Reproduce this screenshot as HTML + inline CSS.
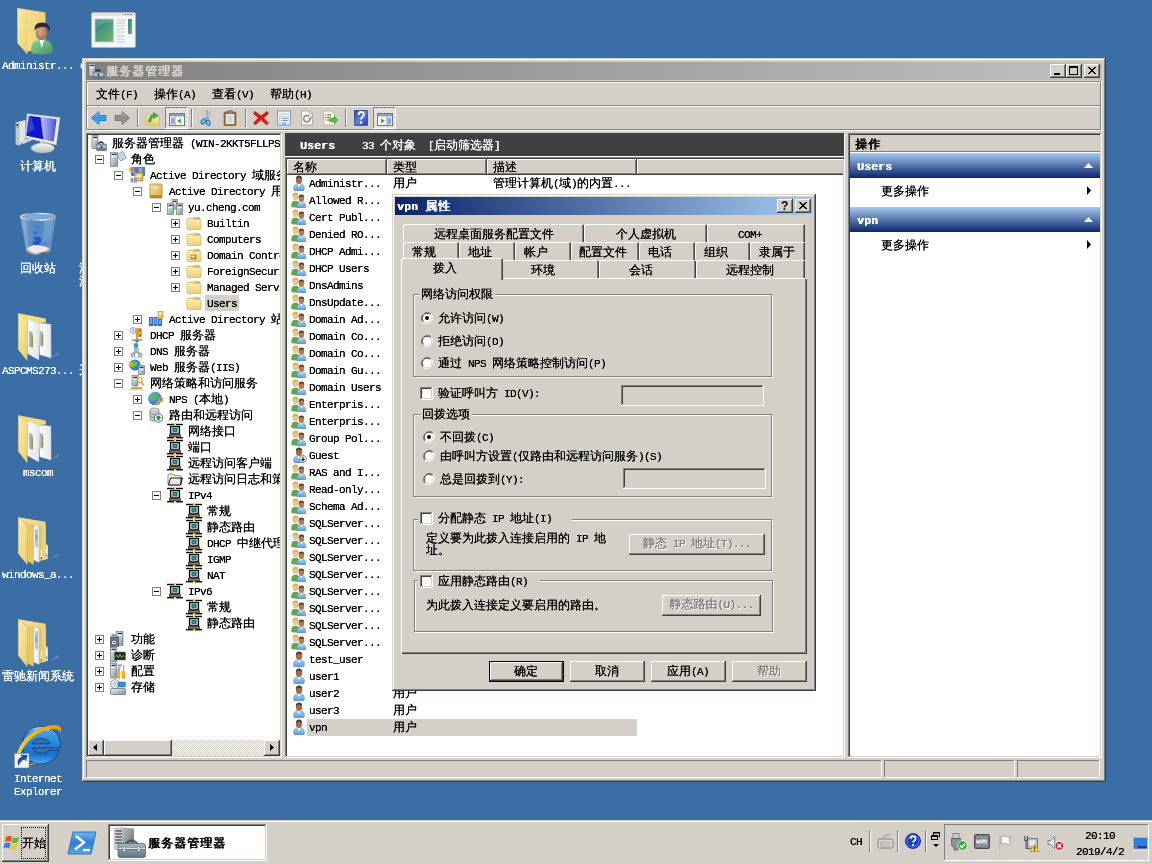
<!DOCTYPE html>
<html lang="zh-CN"><head><meta charset="utf-8"><title>服务器管理器</title>
<style>
*{box-sizing:border-box;margin:0;padding:0}
html,body{width:1152px;height:864px;overflow:hidden;background:#3a6ea5}
#root{left:0;top:0;width:1152px;height:864px;will-change:transform}
body{font-family:"Liberation Mono","WenQuanYi Zen Hei",monospace;font-size:12px;color:#000;position:relative;cursor:default;text-shadow:0 0 0 currentColor}
div{position:absolute}
svg{position:absolute;overflow:visible}
i{font-style:normal;font-size:11px;letter-spacing:-0.6px}
.t{white-space:pre;line-height:16px;height:16px}
.b{letter-spacing:1px;text-shadow:1px 0 0 currentColor,0 0 0 currentColor}
.b i{letter-spacing:0.4px}
.win{background:#d4d0c8;box-shadow:inset -1px -1px #404040,inset 1px 1px #d4d0c8,inset -2px -2px #808080,inset 2px 2px #fff}
.btn{background:#d4d0c8;box-shadow:inset -1px -1px #404040,inset 1px 1px #fff,inset -2px -2px #808080,inset 2px 2px #d4d0c8}
.sunk{box-shadow:inset -1px -1px #fff,inset 1px 1px #808080,inset -2px -2px #d4d0c8,inset 2px 2px #404040}
.sunk1{box-shadow:inset -1px -1px #fff,inset 1px 1px #808080}
.rais1{box-shadow:inset -1px -1px #808080,inset 1px 1px #fff}
.etch{box-shadow:inset -1px -1px #fff,inset 1px 1px #808080,inset -2px -2px #808080,inset 2px 2px #fff}
.chk{background-image:repeating-conic-gradient(#fff 0 25%,#d4d0c8 0 50%);background-size:2px 2px}
.dis{color:#808080;text-shadow:0 0 0 #808080,1px 1px 0 #fff}
.wl{color:#fff}
.dl{color:#fff;text-align:center;white-space:nowrap;line-height:13px}
.grp{border:1px solid #808080;box-shadow:1px 1px #fff,inset 1px 1px #fff}
.tab{background:#d4d0c8;border-radius:2px 2px 0 0;box-shadow:inset 1px 1px #fff,inset -1px 0 #404040,inset -2px 0 #808080;text-align:center;white-space:nowrap}
</style></head>
<body>
<svg width="0" height="0" style="position:absolute"><defs>
<linearGradient id="gSrv" x1="0" y1="0" x2="1" y2="1"><stop offset="0" stop-color="#eef2f5"/><stop offset="1" stop-color="#8494a2"/></linearGradient>
<linearGradient id="gTool" x1="0" y1="0" x2="0" y2="1"><stop offset="0" stop-color="#a8b8c6"/><stop offset="1" stop-color="#5f7282"/></linearGradient>
<linearGradient id="gBook" x1="0" y1="0" x2="1" y2="1"><stop offset="0" stop-color="#fbe9a6"/><stop offset="1" stop-color="#d9a92e"/></linearGradient>
<linearGradient id="gFold" x1="0" y1="0" x2="0" y2="1"><stop offset="0" stop-color="#fdf0bd"/><stop offset="1" stop-color="#efcf72"/></linearGradient>
<radialGradient id="gGlobe" cx=".35" cy=".3" r=".8"><stop offset="0" stop-color="#7fc4ff"/><stop offset="1" stop-color="#1858b8"/></radialGradient>
<linearGradient id="gShirt" x1="0" y1="0" x2="0" y2="1"><stop offset="0" stop-color="#a8d0f4"/><stop offset="1" stop-color="#5b9bdc"/></linearGradient>
<linearGradient id="gBlueArr" x1="0" y1="0" x2="0" y2="1"><stop offset="0" stop-color="#8fd0ff"/><stop offset=".5" stop-color="#2f95f0"/><stop offset="1" stop-color="#5fb8ff"/></linearGradient>
<linearGradient id="gGrayArr" x1="0" y1="0" x2="0" y2="1"><stop offset="0" stop-color="#c4c4c4"/><stop offset=".5" stop-color="#8a8a8a"/><stop offset="1" stop-color="#b0b0b0"/></linearGradient>
<linearGradient id="gHelp" x1="0" y1="0" x2="1" y2="1"><stop offset="0" stop-color="#2a3fb0"/><stop offset=".5" stop-color="#5f7fe0"/><stop offset="1" stop-color="#2438a8"/></linearGradient>
<pattern id="pDot" width="2" height="2" patternUnits="userSpaceOnUse"><rect width="2" height="2" fill="#f4ec5a"/><rect width="1" height="1" fill="#fff"/><rect x="1" y="1" width="1" height="1" fill="#fff"/></pattern>
<linearGradient id="gFoldBack" x1="0" y1="0" x2="1" y2="0"><stop offset="0" stop-color="#f6e49c"/><stop offset="1" stop-color="#ecd074"/></linearGradient>
<linearGradient id="gFoldFront" x1="0" y1="0" x2="1" y2="1"><stop offset="0" stop-color="#fbeeb0"/><stop offset="1" stop-color="#eccb64"/></linearGradient>
<linearGradient id="gDoc" x1="0" y1="0" x2="1" y2="0"><stop offset="0" stop-color="#fff"/><stop offset="1" stop-color="#e4e6e8"/></linearGradient>
<linearGradient id="gGreenShirt" x1="0" y1="0" x2="1" y2="1"><stop offset="0" stop-color="#8fd0a0"/><stop offset="1" stop-color="#3f9a5c"/></linearGradient>
<radialGradient id="gSkin" cx=".4" cy=".4" r=".7"><stop offset="0" stop-color="#d9a884"/><stop offset="1" stop-color="#9a6848"/></radialGradient>
<linearGradient id="gGreenPic" x1="0" y1="0" x2="1" y2="1"><stop offset="0" stop-color="#2f7f8a"/><stop offset="1" stop-color="#6fb86a"/></linearGradient>
<linearGradient id="gScreen" x1="0" y1="0" x2="1" y2="1"><stop offset="0" stop-color="#1018c0"/><stop offset=".5" stop-color="#0a18d8"/><stop offset="1" stop-color="#0810a8"/></linearGradient>
<linearGradient id="gStand" x1="0" y1="0" x2="0" y2="1"><stop offset="0" stop-color="#f4f5f6"/><stop offset="1" stop-color="#b8bec4"/></linearGradient>
<linearGradient id="gBin" x1="0" y1="0" x2="1" y2="0"><stop offset="0" stop-color="#7fa8d8"/><stop offset=".45" stop-color="#5288c4"/><stop offset="1" stop-color="#6f9cd0"/></linearGradient>
<radialGradient id="gIE" cx=".5" cy=".4" r=".6"><stop offset="0" stop-color="#7fd0ff" stop-opacity=".0"/><stop offset="1" stop-color="#1c56b8" stop-opacity="0"/></radialGradient>
<linearGradient id="gIEe" x1="0" y1="0" x2="0" y2="1"><stop offset="0" stop-color="#5fa8e0"/><stop offset=".35" stop-color="#2a8fdc"/><stop offset=".75" stop-color="#1c6fd0"/><stop offset="1" stop-color="#48b0f0"/></linearGradient>
<linearGradient id="gGloss" x1="0" y1="0" x2="1" y2="0"><stop offset="0" stop-color="#fff" stop-opacity=".75"/><stop offset="1" stop-color="#fff" stop-opacity=".25"/></linearGradient>
<linearGradient id="gBinBase" x1="0" y1="0" x2="1" y2="0"><stop offset="0" stop-color="#a8aeb4"/><stop offset=".4" stop-color="#f0f2f4"/><stop offset=".7" stop-color="#60666c"/><stop offset="1" stop-color="#c8ccd0"/></linearGradient>
<linearGradient id="gRim" x1="0" y1="0" x2="1" y2="0"><stop offset="0" stop-color="#e8eaec"/><stop offset=".3" stop-color="#a08a70"/><stop offset=".6" stop-color="#f4f4f4"/><stop offset="1" stop-color="#b09a80"/></linearGradient>
<radialGradient id="gIEb" cx=".5" cy=".5" r=".5"><stop offset="0" stop-color="#3a6ea5" stop-opacity="0"/><stop offset="1" stop-color="#3a6ea5" stop-opacity="0"/></radialGradient>
<linearGradient id="gOrbit" x1="0" y1="1" x2="1" y2="0"><stop offset="0" stop-color="#e8d860"/><stop offset=".4" stop-color="#f8c010"/><stop offset="1" stop-color="#f09810"/></linearGradient>
<linearGradient id="gSrvSide" x1="0" y1="0" x2="1" y2="1"><stop offset="0" stop-color="#b8bcc0"/><stop offset="1" stop-color="#666c72"/></linearGradient>
<linearGradient id="gPS" x1="0" y1="0" x2="0" y2="1"><stop offset="0" stop-color="#6fb4f0"/><stop offset=".5" stop-color="#2f7fd0"/><stop offset="1" stop-color="#58a8e8"/></linearGradient>
<symbol id="i_srvmgr" viewBox="0 0 16 16"><rect x="1" y="0.5" width="6" height="13" fill="url(#gSrv)" stroke="#5a6a78" stroke-width=".6"/><rect x="2" y="1.8" width="4" height="1.2" fill="#2c3e50"/><rect x="2" y="4" width="4" height="1" fill="#fff"/><path d="M7.5 8.5q2.5-3 5 0" fill="none" stroke="#222" stroke-width="1.3"/><rect x="5.5" y="9" width="10" height="6.5" rx="1" fill="url(#gTool)" stroke="#4a5a68" stroke-width=".6"/><rect x="5.5" y="11.3" width="10" height="1" fill="#dfe8ee"/><rect x="9.8" y="10.8" width="1.4" height="2.4" fill="#333"/></symbol><symbol id="i_roles" viewBox="0 0 16 16"><rect x="0.5" y="1.5" width="7" height="14" fill="url(#gSrv)" stroke="#5a6a78" stroke-width=".6"/><rect x="1.5" y="2.8" width="5" height="1.2" fill="#2c3e50"/><rect x="1.5" y="5" width="5" height="1" fill="#fff"/><rect x="4.7" y="12.7" width="1.6" height="1.6" fill="#5fdc3a"/><path d="M7.5 3.200l5.500-2.700 3 6.500-5.500 3z" fill="#e6eefa" stroke="#5f86b8" stroke-width=".8"/><path d="M9.300 4.600l3.500-1.600M10.100 6.300l3.500-1.600M10.900 8l3.500-1.600" stroke="#7fa0c8" stroke-width=".7"/></symbol><symbol id="i_adds" viewBox="0 0 16 16"><rect x="2" y="0" width="14" height="9" fill="#4d7fd6"/><rect x="10" y="1" width="3" height="6" fill="#c9a46a"/><rect x="6" y="6" width="8" height="8" fill="url(#gBook)" stroke="#a07818" stroke-width=".6"/><rect x="8" y="8" width="4" height="2" fill="#fff6d5"/><circle cx="2.6" cy="2.6" r="2" fill="none" stroke="#e8a020" stroke-width="1.3"/><path d="M4 4l4 4" stroke="#e8a020" stroke-width="1.4"/><rect x="1.5" y="11" width="3" height="4.5" fill="#8d9aa6"/><rect x="5" y="11" width="3" height="4.5" fill="#8d9aa6"/><rect x="2.2" y="14" width="1.4" height="1.2" fill="#5fdc3a"/><rect x="5.8" y="14" width="1.4" height="1.2" fill="#5fdc3a"/></symbol><symbol id="i_aduc" viewBox="0 0 16 16"><rect x="2" y="1" width="12" height="14" rx=".8" fill="url(#gBook)" stroke="#a07818" stroke-width=".7"/><rect x="5" y="3.3" width="6" height="2.6" fill="#fff8dc" stroke="#c9a646" stroke-width=".4"/><rect x="2" y="12.2" width="12" height="2.8" fill="#b88a1e"/></symbol><symbol id="i_domain" viewBox="0 0 16 16"><rect x="5" y="0.5" width="5.5" height="9" fill="url(#gSrv)" stroke="#5a6a78" stroke-width=".6"/><rect x="6" y="1.8" width="3.5" height="1.2" fill="#2c3e50"/><rect x="6" y="4" width="3.5" height="1" fill="#fff"/><rect x="0.5" y="4.5" width="6" height="11" fill="url(#gSrv)" stroke="#5a6a78" stroke-width=".6"/><rect x="1.5" y="5.8" width="4" height="1.2" fill="#2c3e50"/><rect x="1.5" y="8" width="4" height="1" fill="#fff"/><rect x="3.7" y="12.7" width="1.6" height="1.6" fill="#5fdc3a"/><rect x="9.5" y="4.5" width="6" height="11" fill="url(#gSrv)" stroke="#5a6a78" stroke-width=".6"/><rect x="10.5" y="5.8" width="4" height="1.2" fill="#2c3e50"/><rect x="10.5" y="8" width="4" height="1" fill="#fff"/><rect x="12.7" y="12.7" width="1.6" height="1.6" fill="#5fdc3a"/><rect x="7" y="9" width="1.8" height="1.8" fill="#5fdc3a"/></symbol><symbol id="i_folder" viewBox="0 0 16 16"><path d="M1.5 3.5h4.5l1.5-1.5h6q1 0 1 1v1.500h-13z" fill="#e8c76a"/><path d="M1 4.500q0-1 1-1h4l1 1h7q1 0 1 1v8q0 1-1 1h-12q-1 0-1-1z" fill="url(#gFold)" stroke="#d1a845" stroke-width=".6"/><rect x="10.500" y="2.600" width="2.500" height="1.200" fill="#7db4e8"/></symbol><symbol id="i_folderdc" viewBox="0 0 16 16"><path d="M1.5 3.5h4.5l1.5-1.5h6q1 0 1 1v1.500h-13z" fill="#e8c76a"/><path d="M1 4.500q0-1 1-1h4l1 1h7q1 0 1 1v8q0 1-1 1h-12q-1 0-1-1z" fill="url(#gFold)" stroke="#d1a845" stroke-width=".6"/><rect x="10.500" y="2.600" width="2.500" height="1.200" fill="#7db4e8"/><rect x="4.500" y="7.500" width="6" height="5" fill="#b98d28"/><rect x="5.500" y="8.500" width="3" height="2" fill="#fdf3cf"/></symbol><symbol id="i_sites" viewBox="0 0 16 16"><rect x="1" y="6" width="4" height="9" fill="#2f6fd0"/><rect x="5.500" y="6" width="4" height="9" fill="#2f6fd0"/><rect x="10" y="8" width="4" height="7" fill="#2f6fd0"/><path d="M2 8h2M2 10h2M2 12h2M6.500 8h2M6.500 10h2M6.500 12h2M11 10h2M11 12h2" stroke="#cfe2ff" stroke-width=".9"/><rect x="10" y="0.500" width="5" height="7" fill="url(#gBook)" stroke="#a07818" stroke-width=".5"/><rect x="11.200" y="2" width="2.600" height="1.500" fill="#fff6d5"/></symbol><symbol id="i_dhcp" viewBox="0 0 16 16"><circle cx="4" cy="3.500" r="3" fill="#eef2f6" stroke="#7a8894" stroke-width=".7"/><path d="M4 1.800v1.900l1.300.8" stroke="#445" stroke-width=".7" fill="none"/><rect x="7" y="1.500" width="5.500" height="8.500" rx="1" fill="#e9a23a" stroke="#b8741a" stroke-width=".5"/><circle cx="11" cy="3.500" r="1" fill="#d22"/><circle cx="11" cy="6" r="1" fill="#f6d21c"/><circle cx="11" cy="8.300" r="1" fill="#3a3"/><path d="M8 10v3M3 13h10" stroke="#c8862a" stroke-width="1.400"/><circle cx="8" cy="14" r="1.800" fill="#3c8ddc"/></symbol><symbol id="i_dns" viewBox="0 0 16 16"><circle cx="7" cy="2.500" r="2.400" fill="#3c8ddc"/><path d="M5.500 2q1.500-1.500 3 0" fill="#5fc24a"/><rect x="5.500" y="5.500" width="4" height="3" fill="#b8c0c8" stroke="#7a8590" stroke-width=".5"/><rect x="2" y="10.500" width="4" height="3" fill="#b8c0c8" stroke="#7a8590" stroke-width=".5"/><rect x="9" y="10.500" width="4" height="3" fill="#b8c0c8" stroke="#7a8590" stroke-width=".5"/><path d="M7.500 8.500v1M4 10.500v-1h7v1" stroke="#7a8590" stroke-width=".7" fill="none"/><rect x="1" y="14" width="13" height="1.500" fill="#d8dde2"/></symbol><symbol id="i_iis" viewBox="0 0 16 16"><circle cx="6" cy="6" r="5.500" fill="#2f7fd8"/><path d="M3 3q3-2 5 0t-1 4-4 1 0-5z" fill="#5fc24a"/><path d="M0.500 2.500l5 2.500-2.500 1 1 2.500-3.500-2z" fill="#f0b428" stroke="#c88a10" stroke-width=".4"/><rect x="9.5" y="6.5" width="6" height="9" fill="url(#gSrv)" stroke="#5a6a78" stroke-width=".6"/><rect x="10.5" y="7.8" width="4" height="1.2" fill="#2c3e50"/><rect x="10.5" y="10" width="4" height="1" fill="#fff"/><rect x="12.7" y="12.7" width="1.6" height="1.6" fill="#5fdc3a"/></symbol><symbol id="i_npas" viewBox="0 0 16 16"><rect x="3" y="0.5" width="6" height="10" fill="url(#gSrv)" stroke="#5a6a78" stroke-width=".6"/><rect x="4" y="1.8" width="4" height="1.2" fill="#2c3e50"/><rect x="4" y="4" width="4" height="1" fill="#fff"/><path d="M2 13h11M7 10.500v2.500" stroke="#c8862a" stroke-width="1.300"/><circle cx="10.500" cy="5" r="2.500" fill="none" stroke="#e8a020" stroke-width="1.200"/><path d="M12 7l3 3.500" stroke="#e8a020" stroke-width="1.500"/><rect x="0.500" y="14" width="14" height="1.200" fill="#c9ced4"/></symbol><symbol id="i_nps" viewBox="0 0 16 16"><circle cx="7" cy="7.500" r="6.800" fill="url(#gGlobe)"/><path d="M3 4q3-3 6-1t-1 4-4 2-1-5zM9 10q3-1 3 1t-2 2.500z" fill="#59b846"/><circle cx="13" cy="8.500" r="1.900" fill="none" stroke="#f0a818" stroke-width="1.300"/><path d="M11.700 9.800l-5 4" stroke="#f0a818" stroke-width="1.500"/></symbol><symbol id="i_rras" viewBox="0 0 16 16"><ellipse cx="6.500" cy="3" rx="4.500" ry="2" fill="#dfe4e8" stroke="#6a7680" stroke-width=".7"/><path d="M2 3v9q0 2 4.500 2t4.500-2v-9" fill="#c5ccd3" stroke="#6a7680" stroke-width=".7"/><path d="M2 6.500q4.500 2.500 9 0M2 9.500q4.500 2.500 9 0" fill="none" stroke="#6a7680" stroke-width=".6"/><circle cx="10.500" cy="11" r="4.300" fill="#fff" stroke="#444" stroke-width=".8"/><path d="M10.500 8l3 3.200h-1.800v2.300h-2.400v-2.300h-1.800z" fill="#1f9a2f"/></symbol><symbol id="i_net" viewBox="0 0 16 16"><rect x="0" y="0.800" width="16" height="1.400" fill="#000"/><rect x="0" y="14" width="16" height="1.400" fill="#000"/><rect x="7" y="0" width="2" height="3.200" fill="#f4e400"/><rect x="7" y="13" width="2" height="3" fill="#f4e400"/><rect x="3.500" y="3.500" width="9" height="7" fill="#c0c0c0" stroke="#000" stroke-width="1.200"/><rect x="6" y="5.300" width="4" height="3.200" fill="#00b0b0" stroke="#303030" stroke-width=".6"/><rect x="5" y="10.500" width="6" height="1.500" fill="#808080"/><rect x="2.500" y="11.800" width="11" height="1.400" fill="#c8c8c8" stroke="#000" stroke-width=".8"/></symbol><symbol id="i_logfold" viewBox="0 0 16 16"><path d="M1 4.500q0-1.500 1.500-1.500h3.500l1.500 1.500h5q1.500 0 1.500 1.500v1" fill="#f4f0c0" stroke="#808080" stroke-width=".9"/><path d="M1 4.500v8.500q0 1 1 1h11" fill="none" stroke="#808080" stroke-width=".9"/><path d="M3.500 7h12l-2 7h-12z" fill="url(#pDot)" stroke="#000" stroke-width=".9"/><path d="M14 7v6.500" stroke="#000" stroke-width=".9"/></symbol><symbol id="i_feat" viewBox="0 0 16 16"><rect x="6.5" y="0.5" width="6.5" height="14" fill="url(#gSrv)" stroke="#5a6a78" stroke-width=".6"/><rect x="7.5" y="1.8" width="4.5" height="1.2" fill="#2c3e50"/><rect x="7.5" y="4" width="4.5" height="1" fill="#fff"/><rect x="10.2" y="11.7" width="1.6" height="1.6" fill="#5fdc3a"/><rect x="0.500" y="6" width="8" height="9.500" fill="#6f7d8a" stroke="#333" stroke-width=".6"/><circle cx="4" cy="11.500" r="2.600" fill="#eef2f6" stroke="#222" stroke-width=".7"/><circle cx="4" cy="11.500" r=".8" fill="#222"/><rect x="1.500" y="3" width="4.500" height="3" fill="#8aa0b8"/></symbol><symbol id="i_diag" viewBox="0 0 16 16"><rect x="0.5" y="0.5" width="6" height="14.5" fill="url(#gSrv)" stroke="#5a6a78" stroke-width=".6"/><rect x="1.5" y="1.8" width="4" height="1.2" fill="#2c3e50"/><rect x="1.5" y="4" width="4" height="1" fill="#fff"/><rect x="3.7" y="12.2" width="1.6" height="1.6" fill="#5fdc3a"/><rect x="4.500" y="5" width="11" height="8" fill="#222" stroke="#777" stroke-width=".7"/><path d="M5.500 10l1.500-2 1.500 3 1.500-4 1.500 3.500 1.500-2 1.500 1" fill="none" stroke="#63e04a" stroke-width=".9"/></symbol><symbol id="i_conf" viewBox="0 0 16 16"><rect x="0.5" y="0.5" width="6" height="14.5" fill="url(#gSrv)" stroke="#5a6a78" stroke-width=".6"/><rect x="1.5" y="1.8" width="4" height="1.2" fill="#2c3e50"/><rect x="1.5" y="4" width="4" height="1" fill="#fff"/><rect x="3.7" y="12.2" width="1.6" height="1.6" fill="#5fdc3a"/><path d="M9 1q-2 1.500-.500 3.500l-1 3h2l.500-3q2-1 1-3.500l-1 1.500h-1z" fill="#c9cfd6" stroke="#6a7680" stroke-width=".5"/><rect x="7.500" y="7.500" width="2.500" height="8" rx=".6" fill="#f4b71e" stroke="#b8801a" stroke-width=".4"/><rect x="12" y="8.500" width="3" height="7" rx=".8" fill="#f4b71e" stroke="#b8801a" stroke-width=".4"/><rect x="12.900" y="2" width="1.200" height="6.500" fill="#9aa5ae"/></symbol><symbol id="i_stor" viewBox="0 0 16 16"><circle cx="5" cy="5" r="4.500" fill="#dfe4e8" stroke="#7a8894" stroke-width=".7"/><circle cx="5" cy="5" r="1.300" fill="#fff" stroke="#7a8894" stroke-width=".5"/><rect x="8" y="3" width="7.500" height="5" rx=".8" fill="#3b8fe0" stroke="#1f5fa8" stroke-width=".5"/><rect x="0.500" y="9.500" width="15" height="6" rx="1.200" fill="url(#gSrv)" stroke="#5a6a78" stroke-width=".7"/><rect x="11.500" y="11.800" width="2" height="1.600" fill="#5fdc3a"/></symbol><symbol id="i_user" viewBox="0 0 16 16"><path d="M3 15.500q-1.500-5 2.500-6.500h5q4 1.500 2.500 6.500q-5 1-10 0z" fill="url(#gShirt)" stroke="#4a86c4" stroke-width=".5"/><path d="M6.500 9l1.500 3 1.500-3z" fill="#fff"/><ellipse cx="8" cy="5" rx="3.100" ry="4" fill="#a8683c"/><path d="M4.800 4.500q0-4 3.200-4t3.300 3.500q-1.500-1.500-3.300-1.500t-3.200 2z" fill="#3a3f45"/></symbol><symbol id="i_group" viewBox="0 0 16 16"><path d="M0.500 15q-1-4.500 2-6h4q3 1.500 2 6q-4 1-8 0z" fill="#5da84a"/><ellipse cx="4.500" cy="5" rx="2.700" ry="3.500" fill="#e8c49a"/><path d="M1.500 5q-.500-4.500 3-4.500t3 4q-1.500-2-3-2t-3 2.500z" fill="#d9b24a"/><path d="M6 15.700q-1-4.300 2-5.700h4.500q3 1.400 2.200 5.700q-4.400.8-8.700 0z" fill="url(#gShirt)" stroke="#4a86c4" stroke-width=".4"/><path d="M9.200 10l1.200 2.300 1.200-2.300z" fill="#fff"/><ellipse cx="10.400" cy="6.500" rx="2.700" ry="3.500" fill="#b87848"/><path d="M7.600 6q0-3.500 2.800-3.500t2.900 3.200q-1.400-1.400-2.900-1.400t-2.800 1.700z" fill="#3a3f45"/></symbol><symbol id="i_userdis" viewBox="0 0 16 16"><path d="M3 15.500q-1.500-5 2.500-6.500h5q4 1.500 2.500 6.500q-5 1-10 0z" fill="url(#gShirt)" stroke="#4a86c4" stroke-width=".5"/><path d="M6.500 9l1.500 3 1.500-3z" fill="#fff"/><ellipse cx="8" cy="5" rx="3.100" ry="4" fill="#a8683c"/><path d="M4.800 4.500q0-4 3.200-4t3.300 3.500q-1.500-1.500-3.300-1.500t-3.200 2z" fill="#3a3f45"/><circle cx="12" cy="12" r="3.500" fill="#fff" stroke="#555" stroke-width=".7"/><path d="M12 9.800v3.500M10.300 11.800l1.700 1.800 1.700-1.800" fill="none" stroke="#222" stroke-width="1.100"/></symbol><symbol id="i_back" viewBox="0 0 16 16"><path d="M8 1.500v4h7v5h-7v4l-7.500-6.500z" fill="url(#gBlueArr)" stroke="#1a6fc8" stroke-width=".8" stroke-linejoin="round"/></symbol><symbol id="i_fwd" viewBox="0 0 16 16"><path d="M8 1.500v4h-7v5h7v4l7.500-6.500z" fill="url(#gGrayArr)" stroke="#6a6a6a" stroke-width=".8" stroke-linejoin="round"/></symbol><symbol id="i_up" viewBox="0 0 16 16"><path d="M1 5h6l1.500 1.500h6v8.500h-13.500z" fill="url(#gFold)" stroke="#d1a845" stroke-width=".7"/><path d="M3.500 12q0-6 5-7.500v-2l4.500 3-4.500 3.300v-2q-2.500.7-2.700 5.200z" fill="#3cb43c" stroke="#1c7a1c" stroke-width=".5"/><rect x="11" y="4" width="2.500" height="1.200" fill="#7db4e8"/></symbol><symbol id="i_tree" viewBox="0 0 16 16"><rect x="0.500" y="2.500" width="15" height="12" fill="#fff" stroke="#6a7a99" stroke-width="1"/><rect x="1" y="3" width="14" height="2.500" fill="#8c9cc0"/><rect x="1" y="5.500" width="5" height="8.500" fill="#dfe6f4"/><path d="M2 8h3M2 10h3M2 12h3" stroke="#3a66c8" stroke-width="1"/><path d="M6 5.500v8.500" stroke="#6a7a99" stroke-width=".8"/><path d="M12 7.500v5l-4-2.500z" fill="#3cae3c"/></symbol><symbol id="i_pane" viewBox="0 0 16 16"><rect x="0.500" y="2.500" width="15" height="12" fill="#fff" stroke="#6a7a99" stroke-width="1"/><rect x="1" y="3" width="14" height="2.500" fill="#8c9cc0"/><rect x="10" y="5.500" width="5" height="8.500" fill="#dfe6f4"/><path d="M11 8h3M11 10h3M11 12h3" stroke="#3a66c8" stroke-width="1"/><path d="M10 5.500v8.500" stroke="#6a7a99" stroke-width=".8"/><path d="M4 7.500v5l4-2.500z" fill="#3cae3c"/></symbol><symbol id="i_cut" viewBox="0 0 16 16"><g transform="rotate(14 8 8)"><path d="M10.300 0.500l-4 9.500M6 0.500l3.800 9.500" stroke="#8aa0bc" stroke-width="1.700"/><path d="M10.300 0.500l-2.600 6.200" stroke="#dfe8f4" stroke-width=".8"/><ellipse cx="5.200" cy="12.300" rx="1.700" ry="2.500" fill="none" stroke="#1f7fe0" stroke-width="1.500" transform="rotate(25 5.200 12.300)"/><ellipse cx="10.300" cy="12.300" rx="1.700" ry="2.500" fill="none" stroke="#1f7fe0" stroke-width="1.500" transform="rotate(-25 10.300 12.300)"/></g></symbol><symbol id="i_paste" viewBox="0 0 16 16"><rect x="2" y="2" width="12" height="13.500" rx="1" fill="#a86a32" stroke="#7a4a1c" stroke-width=".6"/><rect x="3.800" y="4" width="8.400" height="10" fill="#fff"/><path d="M4.800 6h6.400M4.800 8h6.400M4.800 10h6.400M4.800 12h6.400" stroke="#7f9cc8" stroke-width=".8"/><rect x="5.500" y="0.800" width="5" height="2.800" rx=".6" fill="#8a8f96" stroke="#555" stroke-width=".5"/></symbol><symbol id="i_del" viewBox="0 0 16 16"><path d="M2 1.500l6 4.500 6-4.500 1.500 2-5 4.500 5 5-2 1.800-5.500-5-5.500 5-2-1.800 5-5-5-4.500z" fill="#e01818" stroke="#a80c0c" stroke-width=".6" stroke-linejoin="round"/></symbol><symbol id="i_prop" viewBox="0 0 16 16"><rect x="1.500" y="1" width="13" height="14" fill="#f4f7fb" stroke="#8a96a8" stroke-width="1"/><rect x="3" y="3" width="10" height="2" fill="#d5dce8"/><rect x="3.500" y="6.500" width="9" height="6" fill="#fff" stroke="#a8b4c8" stroke-width=".6"/><path d="M5 8.300h1M7 8.300h4.500M5 10.500h1M7 10.500h4.500" stroke="#3a76d8" stroke-width=".9"/><rect x="6" y="13.300" width="4" height="1.400" fill="#2fb6f0"/></symbol><symbol id="i_refresh" viewBox="0 0 16 16"><path d="M2.500 1h8l3 3v11h-11z" fill="#f6f6f6" stroke="#a0a0a0" stroke-width=".8"/><path d="M10.500 1v3h3" fill="#e0e0e0" stroke="#a0a0a0" stroke-width=".6"/><path d="M11 9a3.200 3.200 0 1 1-1-2.600" fill="none" stroke="#8a8a8a" stroke-width="1.600"/><path d="M9.200 9.200h3.300v-3.200z" fill="#8a8a8a"/></symbol><symbol id="i_export" viewBox="0 0 16 16"><path d="M1.500 1h8l3 3v11h-11z" fill="#fbf6dc" stroke="#b8b090" stroke-width=".8"/><path d="M3.300 5h1M5.300 5h4M3.300 7.500h1M5.300 7.500h3M3.300 10h1M5.300 10h2.500" stroke="#4a5a78" stroke-width="1"/><path d="M8 8.500h4v-2.200l3.800 3.700-3.800 3.700v-2.200h-4z" fill="#4cc43c" stroke="#1f8a1f" stroke-width=".6"/></symbol><symbol id="i_help" viewBox="0 0 16 16"><rect x="1.500" y="0.500" width="13" height="15" fill="url(#gHelp)" stroke="#1c2f8a" stroke-width=".6"/><path d="M5.500 5q0-3 2.700-3t2.600 2.600q0 1.500-1.400 2.400t-1.300 2.500" fill="none" stroke="#fff" stroke-width="1.900"/><circle cx="8.100" cy="12.500" r="1.200" fill="#fff"/></symbol><symbol id="B_folder_docs" viewBox="0 0 48 48"><path d="M4.400 0.200l27.200 5.200.400 4-18 1z" fill="#f3dc7e"/><path d="M13.500 6l11.600 4.600-.300 36.300-11.300-6.500z" fill="url(#gDoc)" stroke="#d0d4d8" stroke-width=".5"/><path d="M15 18l3.500 1v16l-3.500-1.500z" fill="#7fa8a0" opacity=".75"/><path d="M17.500 22l1.500 .500v12l-1.500-.500z" fill="#a07830" opacity=".8"/><path d="M15 36l8 3.500M15 38.500l8 3.500" stroke="#dcdfe2" stroke-width=".8"/><path d="M25.100 9.900l11.700 1.300.300 33.700-11.300-3.200z" fill="url(#gDoc)" stroke="#d0d4d8" stroke-width=".5"/><path d="M26 18l3 .800v15l-3-1z" fill="#7fa8a0" opacity=".75"/><path d="M28 21l1.300 .400v11l-1.300-.400z" fill="#a07830" opacity=".8"/><path d="M38 44l6-5 1 3z" fill="#fff" opacity=".18"/><path d="M4.400 0.200l9.100 7.500-.400 39.800-8.700-11z" fill="url(#gFoldFront)" stroke="#e9cf74" stroke-width=".5"/></symbol><symbol id="B_folder_sub" viewBox="0 0 48 48"><path d="M4.400 0.200l27.200 4.500.400 22.700 1.900.600v13.700l-6.200 1.900-14-36z" fill="url(#gFoldBack)"/><path d="M13.500 7.300l6.500.700-.400 39.500-6.100-3.200z" fill="#e6c866" stroke="#cfae4c" stroke-width=".4"/><path d="M20 8l5.100 1v36.600l-5.500-2.600z" fill="url(#gDoc)" stroke="#b8bcc0" stroke-width=".4"/><path d="M21 12l3 .600v18l-3-.800z" fill="#aeb6c0" opacity=".8"/><path d="M21.500 17l1.500.300v6l-1.500-.300z" fill="#5f9ad8" opacity=".8"/><path d="M25.100 9l2.600-.400v34.400l-2.600 2z" fill="#e2c25c"/><path d="M27.700 8.600l4 .600.300 18.200 1.900.600v13.700l-6.200 1.900z" fill="#ecd07a"/><path d="M26.800 33h1.200v9h-1.200z" fill="#fff"/><rect x="26.800" y="40" width="1.200" height="2.200" fill="#2f8fe8"/><path d="M32 30h1.200v9.500h-1.200z" fill="#fff"/><rect x="32" y="37.500" width="1.200" height="2" fill="#2f8fe8"/><path d="M36 42l8-6 1 3z" fill="#fff" opacity=".18"/><path d="M4.400 0.200l9.100 7.500-.400 39.800-8.700-11z" fill="url(#gFoldFront)" stroke="#e9cf74" stroke-width=".5"/></symbol><symbol id="B_userfolder" viewBox="0 0 48 48"><path d="M2.500 1l28 4.500v36l-18 3z" fill="url(#gFoldBack)"/><path d="M2.500 1l10 7-.300 39-9.700-11z" fill="url(#gFoldFront)" stroke="#e9cf74" stroke-width=".5"/><path d="M16.500 46q-2-11 6.500-13h7.500q8.500 2 7 13q-10.500 2.500-21 0z" fill="url(#gGreenShirt)"/><path d="M24.500 33l2.200 8 2.300-8z" fill="#fff"/><ellipse cx="26.500" cy="26" rx="5.800" ry="7.300" fill="url(#gSkin)"/><path d="M19.500 24q-1-8.500 7.500-8.500t8 9.500q-2-5.500-8-5.200t-7.500 4.200z" fill="#2a2a2a"/></symbol><symbol id="B_cpl" viewBox="0 0 48 48"><rect x="0.500" y="0.500" width="44" height="35" rx="1.500" fill="#f4f6f8" stroke="#aab0b8" stroke-width="1"/><rect x="1" y="1" width="43" height="3" fill="#dfe3e8"/><rect x="4" y="7" width="18.500" height="23" fill="url(#gGreenPic)" stroke="#c8ccd0" stroke-width="1"/><path d="M5 16q6-7 17-6v-2.500h-17z" fill="#fff" opacity=".15"/><path d="M26 8h8M26 11h8M26 14h8M26 17h8M26 20h8M26 24h8M26 27h8M26 30h8" stroke="#c4c8cc" stroke-width="1"/><rect x="37" y="7" width="4" height="15" fill="url(#gGreenPic)"/><path d="M33 2.500h2M36 2.500h2M39 2.500h2" stroke="#888" stroke-width="1.200"/></symbol><symbol id="B_computer" viewBox="0 0 48 48"><path d="M1.800 12.800l3.900-1.300 5.800-1.500v18l-5.800 7.500-3.900-1.300z" fill="#e4e6e9"/><path d="M1.800 12.800l3.900-1.300v24l-3.900-1.300z" fill="#c4c8cd"/><rect x="2.600" y="14" width="1.600" height="2" fill="#222"/><rect x="2.600" y="15.800" width="1.600" height="2.200" fill="#4fe01c"/><path d="M6 31l10-3.500 4 1.500-11 5z" fill="#e9ebee"/><path d="M7.500 32.500l9-3.600" stroke="#9aa0a8" stroke-width=".7"/><path d="M26 31l7 2.500-.500 5h-7.500z" fill="#d4d8dc"/><ellipse cx="28.700" cy="38.100" rx="11.700" ry="4.900" fill="url(#gStand)" stroke="#b0b6bc" stroke-width=".5"/><path d="M13.100 3.700l32.800 3.900-3.600 27.300-30.800-7.200z" fill="#eceef0" stroke="#b8bcc2" stroke-width=".6"/><path d="M14.800 5.700l27.800 3.500-2.900 22.400-27.500-5.800z" fill="url(#gScreen)"/><path d="M26.500 7.200l16.100 2-2.900 22.400-10.300-2.200z" fill="url(#gGloss)"/><path d="M14.800 5.700l2 .300 3.500 13-7.500 5z" fill="#fff" opacity=".18"/></symbol><symbol id="B_bin" viewBox="0 0 48 48"><path d="M6.300 6l5.900 35q12 4.500 24 0l5.700-35z" fill="url(#gBin)" opacity=".9"/><path d="M30 9l9 -1-2.500 16-8 8z" fill="#fff" opacity=".12"/><path d="M8 9l4 1 3 28-2.500-.500z" fill="#fff" opacity=".15"/><circle cx="21" cy="21.500" r="1.600" fill="#2458d0" opacity=".8"/><path d="M22.500 26q4-1 4.500 3t-3.500 5-4.500-1.500 2-2.500-1-2 2.500-2z" fill="#1f4fd0" opacity=".85"/><ellipse cx="24" cy="39" rx="12" ry="5" fill="url(#gBinBase)"/><ellipse cx="24" cy="38" rx="10" ry="3.400" fill="#e8eaec"/><path d="M12 40q12 7 24 0" fill="none" stroke="#50565c" stroke-width="1" opacity=".7"/><ellipse cx="24" cy="5.700" rx="17.400" ry="3.400" fill="#79a9de" stroke="url(#gRim)" stroke-width="1.300"/></symbol><symbol id="B_ie" viewBox="0 0 48 48"><circle cx="27.100" cy="25.200" r="18.300" fill="url(#gIEb)"/><path d="M27.100 6.400a18.800 18.800 0 1 0 18 24h-9.500a10.500 9 0 0 1-17.600-2.600h28.400a18.800 18.800 0 0 0-19.300-21.400zM18 23.800a9.500 7.500 0 0 1 18.200 0z" fill="url(#gIEe)" fill-rule="evenodd" stroke="#0c2f80" stroke-width=".7"/><path d="M13 12q8-6.500 19-5 4 1.500 3 4-12-3.500-22 1z" fill="#fff" opacity=".35"/><path d="M3 33q4-12 14-19.500t22-8.500q7 0 8 3.500t-1.500 4q1.500-3.500-6.500-3.500-11 .500-20 8t-13 17.500z" fill="url(#gOrbit)"/><path d="M16 44.500l6-2.500-.500 1-5 2.300z" fill="#f0b020"/><rect x="0.500" y="33.500" width="14.500" height="14.500" fill="#f4f6f8" stroke="#8a929c" stroke-width=".7"/><path d="M4.500 46q-3-7 3.500-9.500l-1.500-2 7 .500-1.500 6.500-1.500-2q-4 1-6 6.500z" fill="#1c4fa8"/></symbol>
</defs></svg>
<div id="root">
<svg style="left:15px;top:7px" width="48" height="48"><use href="#B_userfolder"/></svg>
<div class="dl" style="left:-22px;top:60px;width:120px;height:13px"><i>Administr...</i></div>
<svg style="left:91px;top:12px" width="48" height="48"><use href="#B_cpl"/></svg>
<div class="dl" style="left:53px;top:60px;width:120px;height:13px"><i>desktop.ini</i></div>
<svg style="left:14px;top:110px" width="48" height="48"><use href="#B_computer"/></svg>
<div class="dl" style="left:-22px;top:161px;width:120px;height:13px">计算机</div>
<svg style="left:14px;top:211px" width="48" height="48"><use href="#B_bin"/></svg>
<div class="dl" style="left:-22px;top:263px;width:120px;height:13px">回收站</div>
<div class="dl" style="left:55px;top:263px;width:120px;height:13px">渗透测试环境</div>
<div class="dl" style="left:55px;top:276px;width:120px;height:13px">源码演示文档</div>
<svg style="left:14px;top:313px" width="48" height="48"><use href="#B_folder_docs"/></svg>
<div class="dl" style="left:-22px;top:365px;width:120px;height:13px"><i>ASPCMS273...</i></div>
<div class="dl" style="left:55px;top:365px;width:120px;height:13px">开发环境配置</div>
<svg style="left:14px;top:415px" width="48" height="48"><use href="#B_folder_docs"/></svg>
<div class="dl" style="left:-22px;top:467px;width:120px;height:13px"><i>mscom</i></div>
<svg style="left:14px;top:517px" width="48" height="48"><use href="#B_folder_sub"/></svg>
<div class="dl" style="left:-22px;top:569px;width:120px;height:13px"><i>windows_a...</i></div>
<svg style="left:14px;top:619px" width="48" height="48"><use href="#B_folder_sub"/></svg>
<div class="dl" style="left:-22px;top:671px;width:120px;height:13px">雷驰新闻系统</div>
<svg style="left:14px;top:720px" width="48" height="48"><use href="#B_ie"/></svg>
<div class="dl" style="left:-22px;top:773px;width:120px;height:13px"><i>Internet</i></div>
<div class="dl" style="left:-22px;top:786px;width:120px;height:13px"><i>Explorer</i></div>
<div class="win" style="left:82px;top:58px;width:1024px;height:724px;"></div>
<div style="left:86px;top:62px;width:1016px;height:18px;background:linear-gradient(90deg,#808080,#c0c0c0)"></div>
<svg style="left:88px;top:63px" width="16" height="16"><use href="#i_srvmgr"/></svg>
<div class="t b" style="left:106px;top:64px;height:16px;line-height:16px;color:#d4d0c8">服务器管理器</div>
<div class="btn" style="left:1050px;top:64px;width:16px;height:14px;"><div style="left:4px;top:9px;width:6px;height:2px;background:#000"></div></div>
<div class="btn" style="left:1066px;top:64px;width:16px;height:14px;"><div style="left:3px;top:2px;width:9px;height:9px;border:1px solid #000;border-top-width:2px"></div></div>
<div class="btn" style="left:1084px;top:64px;width:16px;height:14px;"><svg style="left:4px;top:3px" width="8" height="7"><path d="M0 0l7 7M1 0l7 7M7 0l-7 7M8 0l-7 7" stroke="#000" stroke-width="1" shape-rendering="crispEdges"/></svg></div>
<div class="etch" style="left:86px;top:81px;width:1016px;height:26px;"></div>
<div class="t" style="left:96px;top:87px;height:16px;line-height:16px;">文件<i>(F)</i></div>
<div class="t" style="left:154px;top:87px;height:16px;line-height:16px;">操作<i>(A)</i></div>
<div class="t" style="left:212px;top:87px;height:16px;line-height:16px;">查看<i>(V)</i></div>
<div class="t" style="left:270px;top:87px;height:16px;line-height:16px;">帮助<i>(H)</i></div>
<div class="etch" style="left:86px;top:105px;width:1016px;height:26px;"></div>
<div style="left:137px;top:109px;width:2px;height:18px;background:#808080;border-right:1px solid #fff"></div>
<div style="left:191px;top:109px;width:2px;height:18px;background:#808080;border-right:1px solid #fff"></div>
<div style="left:245px;top:109px;width:2px;height:18px;background:#808080;border-right:1px solid #fff"></div>
<div style="left:345px;top:109px;width:2px;height:18px;background:#808080;border-right:1px solid #fff"></div>
<svg style="left:91px;top:110px" width="16" height="16"><use href="#i_back"/></svg>
<svg style="left:114px;top:110px" width="16" height="16"><use href="#i_fwd"/></svg>
<svg style="left:145px;top:110px" width="16" height="16"><use href="#i_up"/></svg>
<div class="chk sunk1" style="left:165px;top:107px;width:23px;height:22px;"></div>
<svg style="left:169px;top:111px" width="16" height="16"><use href="#i_tree"/></svg>
<svg style="left:199px;top:110px" width="16" height="16"><use href="#i_cut"/></svg>
<svg style="left:222px;top:110px" width="16" height="16"><use href="#i_paste"/></svg>
<svg style="left:253px;top:110px" width="16" height="16"><use href="#i_del"/></svg>
<svg style="left:276px;top:110px" width="16" height="16"><use href="#i_prop"/></svg>
<svg style="left:299px;top:110px" width="16" height="16"><use href="#i_refresh"/></svg>
<svg style="left:322px;top:110px" width="16" height="16"><use href="#i_export"/></svg>
<svg style="left:353px;top:110px" width="16" height="16"><use href="#i_help"/></svg>
<div class="chk sunk1" style="left:373px;top:107px;width:23px;height:22px;"></div>
<svg style="left:377px;top:111px" width="16" height="16"><use href="#i_pane"/></svg>
<div class="sunk" style="left:86px;top:133px;width:196px;height:625px;background:#fff"></div>
<div style="left:88px;top:135px;width:192px;height:605px;overflow:hidden"><svg style="left:3px;top:0px" width="16" height="16"><use href="#i_srvmgr"/></svg><div class="t" style="left:24px;top:1px;height:16px;line-height:16px;">服务器管理器<i> (WIN-2KKT5FLLPS</i></div><div style="left:7px;top:20px;width:9px;height:9px;border:1px solid #808080;background:#fff"><div style="left:1px;top:3px;width:5px;height:1px;background:#000"></div></div><svg style="left:22px;top:16px" width="16" height="16"><use href="#i_roles"/></svg><div class="t" style="left:43px;top:17px;height:16px;line-height:16px;">角色</div><div style="left:26px;top:36px;width:9px;height:9px;border:1px solid #808080;background:#fff"><div style="left:1px;top:3px;width:5px;height:1px;background:#000"></div></div><svg style="left:41px;top:32px" width="16" height="16"><use href="#i_adds"/></svg><div class="t" style="left:62px;top:33px;height:16px;line-height:16px;"><i>Active Directory </i>域服务</div><div style="left:45px;top:52px;width:9px;height:9px;border:1px solid #808080;background:#fff"><div style="left:1px;top:3px;width:5px;height:1px;background:#000"></div></div><svg style="left:60px;top:48px" width="16" height="16"><use href="#i_aduc"/></svg><div class="t" style="left:81px;top:49px;height:16px;line-height:16px;"><i>Active Directory </i>用户和计算机</div><div style="left:64px;top:68px;width:9px;height:9px;border:1px solid #808080;background:#fff"><div style="left:1px;top:3px;width:5px;height:1px;background:#000"></div></div><svg style="left:79px;top:64px" width="16" height="16"><use href="#i_domain"/></svg><div class="t" style="left:100px;top:65px;height:16px;line-height:16px;"><i>yu.cheng.com</i></div><div style="left:83px;top:84px;width:9px;height:9px;border:1px solid #808080;background:#fff"><div style="left:1px;top:3px;width:5px;height:1px;background:#000"></div><div style="left:3px;top:1px;width:1px;height:5px;background:#000"></div></div><svg style="left:98px;top:80px" width="16" height="16"><use href="#i_folder"/></svg><div class="t" style="left:119px;top:81px;height:16px;line-height:16px;"><i>Builtin</i></div><div style="left:83px;top:100px;width:9px;height:9px;border:1px solid #808080;background:#fff"><div style="left:1px;top:3px;width:5px;height:1px;background:#000"></div><div style="left:3px;top:1px;width:1px;height:5px;background:#000"></div></div><svg style="left:98px;top:96px" width="16" height="16"><use href="#i_folder"/></svg><div class="t" style="left:119px;top:97px;height:16px;line-height:16px;"><i>Computers</i></div><div style="left:83px;top:116px;width:9px;height:9px;border:1px solid #808080;background:#fff"><div style="left:1px;top:3px;width:5px;height:1px;background:#000"></div><div style="left:3px;top:1px;width:1px;height:5px;background:#000"></div></div><svg style="left:98px;top:112px" width="16" height="16"><use href="#i_folderdc"/></svg><div class="t" style="left:119px;top:113px;height:16px;line-height:16px;"><i>Domain Controllers</i></div><div style="left:83px;top:132px;width:9px;height:9px;border:1px solid #808080;background:#fff"><div style="left:1px;top:3px;width:5px;height:1px;background:#000"></div><div style="left:3px;top:1px;width:1px;height:5px;background:#000"></div></div><svg style="left:98px;top:128px" width="16" height="16"><use href="#i_folder"/></svg><div class="t" style="left:119px;top:129px;height:16px;line-height:16px;"><i>ForeignSecurityPrincipals</i></div><div style="left:83px;top:148px;width:9px;height:9px;border:1px solid #808080;background:#fff"><div style="left:1px;top:3px;width:5px;height:1px;background:#000"></div><div style="left:3px;top:1px;width:1px;height:5px;background:#000"></div></div><svg style="left:98px;top:144px" width="16" height="16"><use href="#i_folder"/></svg><div class="t" style="left:119px;top:145px;height:16px;line-height:16px;"><i>Managed Service Accounts</i></div><svg style="left:98px;top:160px" width="16" height="16"><use href="#i_folder"/></svg><div style="left:117px;top:160px;width:34px;height:16px;background:#d4d0c8"></div><div class="t" style="left:119px;top:161px;height:16px;line-height:16px;"><i>Users</i></div><div style="left:45px;top:180px;width:9px;height:9px;border:1px solid #808080;background:#fff"><div style="left:1px;top:3px;width:5px;height:1px;background:#000"></div><div style="left:3px;top:1px;width:1px;height:5px;background:#000"></div></div><svg style="left:60px;top:176px" width="16" height="16"><use href="#i_sites"/></svg><div class="t" style="left:81px;top:177px;height:16px;line-height:16px;"><i>Active Directory </i>站点和服务</div><div style="left:26px;top:196px;width:9px;height:9px;border:1px solid #808080;background:#fff"><div style="left:1px;top:3px;width:5px;height:1px;background:#000"></div><div style="left:3px;top:1px;width:1px;height:5px;background:#000"></div></div><svg style="left:41px;top:192px" width="16" height="16"><use href="#i_dhcp"/></svg><div class="t" style="left:62px;top:193px;height:16px;line-height:16px;"><i>DHCP </i>服务器</div><div style="left:26px;top:212px;width:9px;height:9px;border:1px solid #808080;background:#fff"><div style="left:1px;top:3px;width:5px;height:1px;background:#000"></div><div style="left:3px;top:1px;width:1px;height:5px;background:#000"></div></div><svg style="left:41px;top:208px" width="16" height="16"><use href="#i_dns"/></svg><div class="t" style="left:62px;top:209px;height:16px;line-height:16px;"><i>DNS </i>服务器</div><div style="left:26px;top:228px;width:9px;height:9px;border:1px solid #808080;background:#fff"><div style="left:1px;top:3px;width:5px;height:1px;background:#000"></div><div style="left:3px;top:1px;width:1px;height:5px;background:#000"></div></div><svg style="left:41px;top:224px" width="16" height="16"><use href="#i_iis"/></svg><div class="t" style="left:62px;top:225px;height:16px;line-height:16px;"><i>Web </i>服务器<i>(IIS)</i></div><div style="left:26px;top:244px;width:9px;height:9px;border:1px solid #808080;background:#fff"><div style="left:1px;top:3px;width:5px;height:1px;background:#000"></div></div><svg style="left:41px;top:240px" width="16" height="16"><use href="#i_npas"/></svg><div class="t" style="left:62px;top:241px;height:16px;line-height:16px;">网络策略和访问服务</div><div style="left:45px;top:260px;width:9px;height:9px;border:1px solid #808080;background:#fff"><div style="left:1px;top:3px;width:5px;height:1px;background:#000"></div><div style="left:3px;top:1px;width:1px;height:5px;background:#000"></div></div><svg style="left:60px;top:256px" width="16" height="16"><use href="#i_nps"/></svg><div class="t" style="left:81px;top:257px;height:16px;line-height:16px;"><i>NPS (</i>本地<i>)</i></div><div style="left:45px;top:276px;width:9px;height:9px;border:1px solid #808080;background:#fff"><div style="left:1px;top:3px;width:5px;height:1px;background:#000"></div></div><svg style="left:60px;top:272px" width="16" height="16"><use href="#i_rras"/></svg><div class="t" style="left:81px;top:273px;height:16px;line-height:16px;">路由和远程访问</div><svg style="left:79px;top:288px" width="16" height="16"><use href="#i_net"/></svg><div class="t" style="left:100px;top:289px;height:16px;line-height:16px;">网络接口</div><svg style="left:79px;top:304px" width="16" height="16"><use href="#i_net"/></svg><div class="t" style="left:100px;top:305px;height:16px;line-height:16px;">端口</div><svg style="left:79px;top:320px" width="16" height="16"><use href="#i_net"/></svg><div class="t" style="left:100px;top:321px;height:16px;line-height:16px;">远程访问客户端</div><svg style="left:79px;top:336px" width="16" height="16"><use href="#i_logfold"/></svg><div class="t" style="left:100px;top:337px;height:16px;line-height:16px;">远程访问日志和策略</div><div style="left:64px;top:356px;width:9px;height:9px;border:1px solid #808080;background:#fff"><div style="left:1px;top:3px;width:5px;height:1px;background:#000"></div></div><svg style="left:79px;top:352px" width="16" height="16"><use href="#i_net"/></svg><div class="t" style="left:100px;top:353px;height:16px;line-height:16px;"><i>IPv4</i></div><svg style="left:98px;top:368px" width="16" height="16"><use href="#i_net"/></svg><div class="t" style="left:119px;top:369px;height:16px;line-height:16px;">常规</div><svg style="left:98px;top:384px" width="16" height="16"><use href="#i_net"/></svg><div class="t" style="left:119px;top:385px;height:16px;line-height:16px;">静态路由</div><svg style="left:98px;top:400px" width="16" height="16"><use href="#i_net"/></svg><div class="t" style="left:119px;top:401px;height:16px;line-height:16px;"><i>DHCP </i>中继代理</div><svg style="left:98px;top:416px" width="16" height="16"><use href="#i_net"/></svg><div class="t" style="left:119px;top:417px;height:16px;line-height:16px;"><i>IGMP</i></div><svg style="left:98px;top:432px" width="16" height="16"><use href="#i_net"/></svg><div class="t" style="left:119px;top:433px;height:16px;line-height:16px;"><i>NAT</i></div><div style="left:64px;top:452px;width:9px;height:9px;border:1px solid #808080;background:#fff"><div style="left:1px;top:3px;width:5px;height:1px;background:#000"></div></div><svg style="left:79px;top:448px" width="16" height="16"><use href="#i_net"/></svg><div class="t" style="left:100px;top:449px;height:16px;line-height:16px;"><i>IPv6</i></div><svg style="left:98px;top:464px" width="16" height="16"><use href="#i_net"/></svg><div class="t" style="left:119px;top:465px;height:16px;line-height:16px;">常规</div><svg style="left:98px;top:480px" width="16" height="16"><use href="#i_net"/></svg><div class="t" style="left:119px;top:481px;height:16px;line-height:16px;">静态路由</div><div style="left:7px;top:500px;width:9px;height:9px;border:1px solid #808080;background:#fff"><div style="left:1px;top:3px;width:5px;height:1px;background:#000"></div><div style="left:3px;top:1px;width:1px;height:5px;background:#000"></div></div><svg style="left:22px;top:496px" width="16" height="16"><use href="#i_feat"/></svg><div class="t" style="left:43px;top:497px;height:16px;line-height:16px;">功能</div><div style="left:7px;top:516px;width:9px;height:9px;border:1px solid #808080;background:#fff"><div style="left:1px;top:3px;width:5px;height:1px;background:#000"></div><div style="left:3px;top:1px;width:1px;height:5px;background:#000"></div></div><svg style="left:22px;top:512px" width="16" height="16"><use href="#i_diag"/></svg><div class="t" style="left:43px;top:513px;height:16px;line-height:16px;">诊断</div><div style="left:7px;top:532px;width:9px;height:9px;border:1px solid #808080;background:#fff"><div style="left:1px;top:3px;width:5px;height:1px;background:#000"></div><div style="left:3px;top:1px;width:1px;height:5px;background:#000"></div></div><svg style="left:22px;top:528px" width="16" height="16"><use href="#i_conf"/></svg><div class="t" style="left:43px;top:529px;height:16px;line-height:16px;">配置</div><div style="left:7px;top:548px;width:9px;height:9px;border:1px solid #808080;background:#fff"><div style="left:1px;top:3px;width:5px;height:1px;background:#000"></div><div style="left:3px;top:1px;width:1px;height:5px;background:#000"></div></div><svg style="left:22px;top:544px" width="16" height="16"><use href="#i_stor"/></svg><div class="t" style="left:43px;top:545px;height:16px;line-height:16px;">存储</div></div>
<div class="chk" style="left:88px;top:740px;width:192px;height:16px;"></div>
<div class="btn" style="left:88px;top:740px;width:16px;height:16px;"><svg style="left:5px;top:4px" width="4" height="7"><path d="M4 0v7l-4-3.500z" fill="#000"/></svg></div>
<div class="btn" style="left:104px;top:740px;width:68px;height:16px;"></div>
<div class="btn" style="left:264px;top:740px;width:16px;height:16px;"><svg style="left:6px;top:4px" width="4" height="7"><path d="M0 0v7l4-3.500z" fill="#000"/></svg></div>
<div class="sunk" style="left:285px;top:133px;width:560px;height:625px;background:#fff"></div>
<div style="left:285px;top:133px;width:559px;height:23px;background:#404040"></div>
<div class="t b" style="left:300px;top:138px;height:16px;line-height:16px;color:#fff"><i>Users</i></div>
<div class="t" style="left:362px;top:138px;height:16px;line-height:16px;color:#fff"><i>33 </i>个对象<i>  [</i>启动筛选器<i>]</i></div>
<div style="left:285px;top:156px;width:559px;height:1px;background:#fff"></div>
<div style="left:285px;top:157px;width:559px;height:1px;background:#808080"></div>
<div style="left:286px;top:158px;width:558px;height:1px;background:#404040"></div>
<div style="left:287px;top:159px;width:556px;height:16px;background:#d4d0c8"></div>
<div style="left:637px;top:159px;width:206px;height:16px;overflow:hidden"><div class="btn" style="left:0px;top:0px;width:230px;height:16px;"></div></div>
<div class="btn" style="left:287px;top:159px;width:100px;height:16px;"></div>
<div class="t" style="left:293px;top:161px;height:14px;line-height:14px;">名称</div>
<div class="btn" style="left:387px;top:159px;width:100px;height:16px;"></div>
<div class="t" style="left:393px;top:161px;height:14px;line-height:14px;">类型</div>
<div class="btn" style="left:487px;top:159px;width:150px;height:16px;"></div>
<div class="t" style="left:493px;top:161px;height:14px;line-height:14px;">描述</div>
<svg style="left:291px;top:175px" width="16" height="16"><use href="#i_user"/></svg>
<div class="t" style="left:309px;top:176px;height:17px;line-height:17px;"><i>Administr...</i></div>
<div class="t" style="left:393px;top:176px;height:17px;line-height:17px;">用户</div>
<div class="t" style="left:493px;top:176px;height:17px;line-height:17px;">管理计算机<i>(</i>域<i>)</i>的内置<i>...</i></div>
<svg style="left:291px;top:192px" width="16" height="16"><use href="#i_group"/></svg>
<div class="t" style="left:309px;top:193px;height:17px;line-height:17px;"><i>Allowed R...</i></div>
<svg style="left:291px;top:209px" width="16" height="16"><use href="#i_group"/></svg>
<div class="t" style="left:309px;top:210px;height:17px;line-height:17px;"><i>Cert Publ...</i></div>
<svg style="left:291px;top:226px" width="16" height="16"><use href="#i_group"/></svg>
<div class="t" style="left:309px;top:227px;height:17px;line-height:17px;"><i>Denied RO...</i></div>
<svg style="left:291px;top:243px" width="16" height="16"><use href="#i_group"/></svg>
<div class="t" style="left:309px;top:244px;height:17px;line-height:17px;"><i>DHCP Admi...</i></div>
<svg style="left:291px;top:260px" width="16" height="16"><use href="#i_group"/></svg>
<div class="t" style="left:309px;top:261px;height:17px;line-height:17px;"><i>DHCP Users</i></div>
<svg style="left:291px;top:277px" width="16" height="16"><use href="#i_group"/></svg>
<div class="t" style="left:309px;top:278px;height:17px;line-height:17px;"><i>DnsAdmins</i></div>
<svg style="left:291px;top:294px" width="16" height="16"><use href="#i_group"/></svg>
<div class="t" style="left:309px;top:295px;height:17px;line-height:17px;"><i>DnsUpdate...</i></div>
<svg style="left:291px;top:311px" width="16" height="16"><use href="#i_group"/></svg>
<div class="t" style="left:309px;top:312px;height:17px;line-height:17px;"><i>Domain Ad...</i></div>
<svg style="left:291px;top:328px" width="16" height="16"><use href="#i_group"/></svg>
<div class="t" style="left:309px;top:329px;height:17px;line-height:17px;"><i>Domain Co...</i></div>
<svg style="left:291px;top:345px" width="16" height="16"><use href="#i_group"/></svg>
<div class="t" style="left:309px;top:346px;height:17px;line-height:17px;"><i>Domain Co...</i></div>
<svg style="left:291px;top:362px" width="16" height="16"><use href="#i_group"/></svg>
<div class="t" style="left:309px;top:363px;height:17px;line-height:17px;"><i>Domain Gu...</i></div>
<svg style="left:291px;top:379px" width="16" height="16"><use href="#i_group"/></svg>
<div class="t" style="left:309px;top:380px;height:17px;line-height:17px;"><i>Domain Users</i></div>
<svg style="left:291px;top:396px" width="16" height="16"><use href="#i_group"/></svg>
<div class="t" style="left:309px;top:397px;height:17px;line-height:17px;"><i>Enterpris...</i></div>
<svg style="left:291px;top:413px" width="16" height="16"><use href="#i_group"/></svg>
<div class="t" style="left:309px;top:414px;height:17px;line-height:17px;"><i>Enterpris...</i></div>
<svg style="left:291px;top:430px" width="16" height="16"><use href="#i_group"/></svg>
<div class="t" style="left:309px;top:431px;height:17px;line-height:17px;"><i>Group Pol...</i></div>
<svg style="left:291px;top:447px" width="16" height="16"><use href="#i_userdis"/></svg>
<div class="t" style="left:309px;top:448px;height:17px;line-height:17px;"><i>Guest</i></div>
<svg style="left:291px;top:464px" width="16" height="16"><use href="#i_group"/></svg>
<div class="t" style="left:309px;top:465px;height:17px;line-height:17px;"><i>RAS and I...</i></div>
<svg style="left:291px;top:481px" width="16" height="16"><use href="#i_group"/></svg>
<div class="t" style="left:309px;top:482px;height:17px;line-height:17px;"><i>Read-only...</i></div>
<svg style="left:291px;top:498px" width="16" height="16"><use href="#i_group"/></svg>
<div class="t" style="left:309px;top:499px;height:17px;line-height:17px;"><i>Schema Ad...</i></div>
<svg style="left:291px;top:515px" width="16" height="16"><use href="#i_group"/></svg>
<div class="t" style="left:309px;top:516px;height:17px;line-height:17px;"><i>SQLServer...</i></div>
<svg style="left:291px;top:532px" width="16" height="16"><use href="#i_group"/></svg>
<div class="t" style="left:309px;top:533px;height:17px;line-height:17px;"><i>SQLServer...</i></div>
<svg style="left:291px;top:549px" width="16" height="16"><use href="#i_group"/></svg>
<div class="t" style="left:309px;top:550px;height:17px;line-height:17px;"><i>SQLServer...</i></div>
<svg style="left:291px;top:566px" width="16" height="16"><use href="#i_group"/></svg>
<div class="t" style="left:309px;top:567px;height:17px;line-height:17px;"><i>SQLServer...</i></div>
<svg style="left:291px;top:583px" width="16" height="16"><use href="#i_group"/></svg>
<div class="t" style="left:309px;top:584px;height:17px;line-height:17px;"><i>SQLServer...</i></div>
<svg style="left:291px;top:600px" width="16" height="16"><use href="#i_group"/></svg>
<div class="t" style="left:309px;top:601px;height:17px;line-height:17px;"><i>SQLServer...</i></div>
<svg style="left:291px;top:617px" width="16" height="16"><use href="#i_group"/></svg>
<div class="t" style="left:309px;top:618px;height:17px;line-height:17px;"><i>SQLServer...</i></div>
<svg style="left:291px;top:634px" width="16" height="16"><use href="#i_group"/></svg>
<div class="t" style="left:309px;top:635px;height:17px;line-height:17px;"><i>SQLServer...</i></div>
<svg style="left:291px;top:651px" width="16" height="16"><use href="#i_user"/></svg>
<div class="t" style="left:309px;top:652px;height:17px;line-height:17px;"><i>test_user</i></div>
<div class="t" style="left:393px;top:652px;height:17px;line-height:17px;">用户</div>
<svg style="left:291px;top:668px" width="16" height="16"><use href="#i_user"/></svg>
<div class="t" style="left:309px;top:669px;height:17px;line-height:17px;"><i>user1</i></div>
<div class="t" style="left:393px;top:669px;height:17px;line-height:17px;">用户</div>
<svg style="left:291px;top:685px" width="16" height="16"><use href="#i_user"/></svg>
<div class="t" style="left:309px;top:686px;height:17px;line-height:17px;"><i>user2</i></div>
<div class="t" style="left:393px;top:686px;height:17px;line-height:17px;">用户</div>
<svg style="left:291px;top:702px" width="16" height="16"><use href="#i_user"/></svg>
<div class="t" style="left:309px;top:703px;height:17px;line-height:17px;"><i>user3</i></div>
<div class="t" style="left:393px;top:703px;height:17px;line-height:17px;">用户</div>
<div style="left:307px;top:719px;width:330px;height:17px;background:#d4d0c8"></div>
<svg style="left:291px;top:719px" width="16" height="16"><use href="#i_user"/></svg>
<div class="t" style="left:309px;top:720px;height:17px;line-height:17px;"><i>vpn</i></div>
<div class="t" style="left:393px;top:720px;height:17px;line-height:17px;">用户</div>
<div class="sunk" style="left:848px;top:133px;width:254px;height:625px;background:#fff"></div>
<div style="left:850px;top:135px;width:250px;height:16px;background:#d4d0c8"></div>
<div class="t b" style="left:855px;top:137px;height:16px;line-height:16px;">操作</div>
<div style="left:850px;top:151px;width:250px;height:1px;background:#808080"></div>
<div style="left:850px;top:152px;width:250px;height:1px;background:#fff"></div>
<div style="left:850px;top:153px;width:250px;height:25px;background:linear-gradient(180deg,#a6caf0,#0a246a)"></div>
<div class="t b" style="left:857px;top:159px;height:16px;line-height:16px;color:#fff"><i>Users</i></div>
<svg style="left:1084px;top:163px" width="9" height="5"><path d="M0 5l4.500-5 4.500 5z" fill="#fff"/></svg>
<div class="t" style="left:881px;top:184px;height:16px;line-height:16px;">更多操作</div>
<svg style="left:1087px;top:186px" width="4" height="9"><path d="M0 0v9l4-4.500z" fill="#000"/></svg>
<div style="left:850px;top:207px;width:250px;height:25px;background:linear-gradient(180deg,#a6caf0,#0a246a)"></div>
<div class="t b" style="left:857px;top:213px;height:16px;line-height:16px;color:#fff"><i>vpn</i></div>
<svg style="left:1084px;top:217px" width="9" height="5"><path d="M0 5l4.500-5 4.500 5z" fill="#fff"/></svg>
<div class="t" style="left:881px;top:238px;height:16px;line-height:16px;">更多操作</div>
<svg style="left:1087px;top:240px" width="4" height="9"><path d="M0 0v9l4-4.500z" fill="#000"/></svg>
<div class="sunk1" style="left:86px;top:760px;width:796px;height:18px;"></div>
<div class="sunk1" style="left:884px;top:760px;width:131px;height:18px;"></div>
<div class="sunk1" style="left:1017px;top:760px;width:83px;height:18px;"></div>
<div class="win" style="left:392px;top:194px;width:424px;height:497px;"></div>
<div style="left:395px;top:197px;width:418px;height:18px;background:linear-gradient(90deg,#0a246a,#a6caf0)"></div>
<div class="t b" style="left:397px;top:199px;height:16px;line-height:16px;color:#fff"><i>vpn </i>属性</div>
<div class="btn" style="left:777px;top:199px;width:16px;height:14px;"><div class="t" style="left:4px;top:0px;font-family:'Liberation Sans',sans-serif;font-weight:bold;font-size:12px;line-height:14px;text-shadow:none">?</div></div>
<div class="btn" style="left:795px;top:199px;width:16px;height:14px;"><svg style="left:4px;top:3px" width="8" height="7"><path d="M0 0l7 7M1 0l7 7M7 0l-7 7M8 0l-7 7" stroke="#000" stroke-width="1" shape-rendering="crispEdges"/></svg></div>
<div class="tab" style="left:403px;top:224px;width:181px;height:18px"></div>
<div class="t" style="left:434px;top:227px;height:16px;line-height:16px;">远程桌面服务配置文件</div>
<div class="tab" style="left:584px;top:224px;width:123px;height:18px"></div>
<div class="t" style="left:616px;top:227px;height:16px;line-height:16px;">个人虚拟机</div>
<div class="tab" style="left:707px;top:224px;width:98px;height:18px"></div>
<div class="t" style="left:738px;top:227px;height:16px;line-height:16px;"><i>COM+</i></div>
<div class="tab" style="left:403px;top:242px;width:56px;height:18px"></div>
<div class="t" style="left:412px;top:245px;height:16px;line-height:16px;">常规</div>
<div class="tab" style="left:459px;top:242px;width:56px;height:18px"></div>
<div class="t" style="left:468px;top:245px;height:16px;line-height:16px;">地址</div>
<div class="tab" style="left:515px;top:242px;width:56px;height:18px"></div>
<div class="t" style="left:524px;top:245px;height:16px;line-height:16px;">帐户</div>
<div class="tab" style="left:571px;top:242px;width:68px;height:18px"></div>
<div class="t" style="left:579px;top:245px;height:16px;line-height:16px;">配置文件</div>
<div class="tab" style="left:639px;top:242px;width:56px;height:18px"></div>
<div class="t" style="left:648px;top:245px;height:16px;line-height:16px;">电话</div>
<div class="tab" style="left:695px;top:242px;width:55px;height:18px"></div>
<div class="t" style="left:704px;top:245px;height:16px;line-height:16px;">组织</div>
<div class="tab" style="left:750px;top:242px;width:55px;height:18px"></div>
<div class="t" style="left:759px;top:245px;height:16px;line-height:16px;">隶属于</div>
<div class="tab" style="left:502px;top:260px;width:97px;height:18px"></div>
<div class="t" style="left:531px;top:263px;height:16px;line-height:16px;">环境</div>
<div class="tab" style="left:599px;top:260px;width:97px;height:18px"></div>
<div class="t" style="left:629px;top:263px;height:16px;line-height:16px;">会话</div>
<div class="tab" style="left:696px;top:260px;width:109px;height:18px"></div>
<div class="t" style="left:726px;top:263px;height:16px;line-height:16px;">远程控制</div>
<div style="left:401px;top:278px;width:406px;height:376px;background:#d4d0c8;box-shadow:inset 1px 1px #fff,inset -1px -1px #404040,inset -2px -2px #808080"></div>
<div class="tab" style="left:401px;top:258px;width:102px;height:22px"></div>
<div style="left:402px;top:278px;width:99px;height:3px;background:#d4d0c8"></div>
<div class="t" style="left:433px;top:261px;height:16px;line-height:16px;">拨入</div>
<div class="grp" style="left:413px;top:294px;width:359px;height:83px;"></div>
<div style="left:419px;top:288px;width:76px;height:14px;background:#d4d0c8"></div>
<div class="t" style="left:421px;top:287px;height:16px;line-height:16px;">网络访问权限</div>
<svg style="left:421px;top:312px" width="12" height="12"><circle cx="6" cy="6" r="5.500" fill="#fff"/><path d="M1.800 10.200a6 6 0 0 1 8.400-8.400" fill="none" stroke="#808080" stroke-width="1"/><path d="M2.600 9.400a4.800 4.800 0 0 1 6.800-6.800" fill="none" stroke="#404040" stroke-width="1"/><path d="M10.200 1.800a6 6 0 0 1-8.400 8.400" fill="none" stroke="#fff" stroke-width="1"/><path d="M9.400 2.600a4.800 4.800 0 0 1-6.800 6.800" fill="none" stroke="#d4d0c8" stroke-width="1"/><circle cx="6" cy="6" r="2" fill="#000"/></svg>
<div class="t" style="left:438px;top:311px;height:16px;line-height:16px;">允许访问<i>(W)</i></div>
<svg style="left:421px;top:335px" width="12" height="12"><circle cx="6" cy="6" r="5.500" fill="#fff"/><path d="M1.800 10.200a6 6 0 0 1 8.400-8.400" fill="none" stroke="#808080" stroke-width="1"/><path d="M2.600 9.400a4.800 4.800 0 0 1 6.800-6.800" fill="none" stroke="#404040" stroke-width="1"/><path d="M10.200 1.800a6 6 0 0 1-8.400 8.400" fill="none" stroke="#fff" stroke-width="1"/><path d="M9.400 2.600a4.800 4.800 0 0 1-6.800 6.800" fill="none" stroke="#d4d0c8" stroke-width="1"/></svg>
<div class="t" style="left:438px;top:334px;height:16px;line-height:16px;">拒绝访问<i>(D)</i></div>
<svg style="left:421px;top:357px" width="12" height="12"><circle cx="6" cy="6" r="5.500" fill="#fff"/><path d="M1.800 10.200a6 6 0 0 1 8.400-8.400" fill="none" stroke="#808080" stroke-width="1"/><path d="M2.600 9.400a4.800 4.800 0 0 1 6.800-6.800" fill="none" stroke="#404040" stroke-width="1"/><path d="M10.200 1.800a6 6 0 0 1-8.400 8.400" fill="none" stroke="#fff" stroke-width="1"/><path d="M9.400 2.600a4.800 4.800 0 0 1-6.800 6.800" fill="none" stroke="#d4d0c8" stroke-width="1"/></svg>
<div class="t" style="left:438px;top:356px;height:16px;line-height:16px;">通过<i> NPS </i>网络策略控制访问<i>(P)</i></div>
<div class="sunk" style="left:420px;top:387px;width:13px;height:13px;background:#fff"></div>
<div class="t" style="left:438px;top:386px;height:16px;line-height:16px;">验证呼叫方<i> ID(V):</i></div>
<div class="sunk" style="left:621px;top:385px;width:143px;height:21px;"></div>
<div class="grp" style="left:413px;top:414px;width:359px;height:83px;"></div>
<div style="left:420px;top:408px;width:52px;height:14px;background:#d4d0c8"></div>
<div class="t" style="left:422px;top:407px;height:16px;line-height:16px;">回拨选项</div>
<svg style="left:423px;top:431px" width="12" height="12"><circle cx="6" cy="6" r="5.500" fill="#fff"/><path d="M1.800 10.200a6 6 0 0 1 8.400-8.400" fill="none" stroke="#808080" stroke-width="1"/><path d="M2.600 9.400a4.800 4.800 0 0 1 6.800-6.800" fill="none" stroke="#404040" stroke-width="1"/><path d="M10.200 1.800a6 6 0 0 1-8.400 8.400" fill="none" stroke="#fff" stroke-width="1"/><path d="M9.400 2.600a4.800 4.800 0 0 1-6.800 6.800" fill="none" stroke="#d4d0c8" stroke-width="1"/><circle cx="6" cy="6" r="2" fill="#000"/></svg>
<div class="t" style="left:440px;top:430px;height:16px;line-height:16px;">不回拨<i>(C)</i></div>
<svg style="left:423px;top:450px" width="12" height="12"><circle cx="6" cy="6" r="5.500" fill="#fff"/><path d="M1.800 10.200a6 6 0 0 1 8.400-8.400" fill="none" stroke="#808080" stroke-width="1"/><path d="M2.600 9.400a4.800 4.800 0 0 1 6.800-6.800" fill="none" stroke="#404040" stroke-width="1"/><path d="M10.200 1.800a6 6 0 0 1-8.400 8.400" fill="none" stroke="#fff" stroke-width="1"/><path d="M9.400 2.600a4.800 4.800 0 0 1-6.800 6.800" fill="none" stroke="#d4d0c8" stroke-width="1"/></svg>
<div class="t" style="left:440px;top:449px;height:16px;line-height:16px;">由呼叫方设置<i>(</i>仅路由和远程访问服务<i>)(S)</i></div>
<svg style="left:423px;top:473px" width="12" height="12"><circle cx="6" cy="6" r="5.500" fill="#fff"/><path d="M1.800 10.200a6 6 0 0 1 8.400-8.400" fill="none" stroke="#808080" stroke-width="1"/><path d="M2.600 9.400a4.800 4.800 0 0 1 6.800-6.800" fill="none" stroke="#404040" stroke-width="1"/><path d="M10.200 1.800a6 6 0 0 1-8.400 8.400" fill="none" stroke="#fff" stroke-width="1"/><path d="M9.400 2.600a4.800 4.800 0 0 1-6.800 6.800" fill="none" stroke="#d4d0c8" stroke-width="1"/></svg>
<div class="t" style="left:440px;top:472px;height:16px;line-height:16px;">总是回拨到<i>(Y):</i></div>
<div class="sunk" style="left:623px;top:468px;width:143px;height:21px;"></div>
<div class="grp" style="left:413px;top:519px;width:359px;height:52px;"></div>
<div style="left:418px;top:512px;width:154px;height:14px;background:#d4d0c8"></div>
<div class="sunk" style="left:420px;top:512px;width:13px;height:13px;background:#fff"></div>
<div class="t" style="left:438px;top:511px;height:16px;line-height:16px;">分配静态<i> IP </i>地址<i>(I)</i></div>
<div class="t" style="left:426px;top:533px;height:12px;line-height:12px;">定义要为此拨入连接启用的<i> IP </i>地</div>
<div class="t" style="left:426px;top:545px;height:12px;line-height:12px;">址。</div>
<div class="btn" style="left:629px;top:534px;width:136px;height:21px;"><div class="t dis" style="left:0;top:2px;width:136px;text-align:center">静态<i> IP </i>地址<i>(T)...</i></div></div>
<div class="grp" style="left:414px;top:580px;width:359px;height:52px;"></div>
<div style="left:418px;top:574px;width:122px;height:14px;background:#d4d0c8"></div>
<div class="sunk" style="left:420px;top:575px;width:13px;height:13px;background:#fff"></div>
<div class="t" style="left:438px;top:574px;height:16px;line-height:16px;">应用静态路由<i>(R)</i></div>
<div class="t" style="left:426px;top:598px;height:16px;line-height:16px;">为此拨入连接定义要启用的路由。</div>
<div class="btn" style="left:662px;top:595px;width:99px;height:21px;"><div class="t dis" style="left:0;top:2px;width:99px;text-align:center">静态路由<i>(U)...</i></div></div>
<div style="left:489px;top:661px;width:75px;height:21px;background:#000"></div>
<div class="btn" style="left:490px;top:662px;width:73px;height:19px;"></div>
<div class="t" style="left:514px;top:664px;height:16px;line-height:16px;">确定</div>
<div class="btn" style="left:570px;top:661px;width:75px;height:21px;"></div>
<div class="t" style="left:595px;top:664px;height:16px;line-height:16px;">取消</div>
<div class="btn" style="left:651px;top:661px;width:75px;height:21px;"></div>
<div class="t" style="left:667px;top:664px;height:16px;line-height:16px;">应用<i>(A)</i></div>
<div class="btn" style="left:732px;top:661px;width:75px;height:21px;"></div>
<div class="t dis" style="left:757px;top:664px;height:16px;line-height:16px;">帮助</div>
<div style="left:0px;top:820px;width:1152px;height:44px;background:#d4d0c8;border-top:1px solid #d4d0c8;box-shadow:inset 0 1px #fff"></div>
<div class="btn" style="left:2px;top:824px;width:47px;height:38px;"></div>
<svg style="left:4px;top:834px" width="16" height="16" viewBox="-1 0 16 16"><path d="M1 3q3-2 6 0l-1.200 5q-3-2-6 0z" fill="#e8501c"/><path d="M8 3.400q3 1.500 6-.4l-1.200 5q-3 2-6 .4z" fill="#5fb82a"/><path d="M-.500 9.500q3-2 6 0l-1.200 5q-3-2-6 0z" fill="#2f7fe0"/><path d="M6.500 9.900q3 1.500 6-.4l-1.200 5q-3 2-6 .4z" fill="#f6c21c"/></svg>
<div style="left:21px;top:827px;width:25px;height:32px;border:1px dotted #000"></div>
<div class="t" style="left:22px;top:836px;height:16px;line-height:16px;">开始</div>
<svg style="left:68px;top:831px" width="29" height="24" viewBox="0 0 29 24"><path d="M5 1h23l-5 22h-23z" fill="url(#gPS)" stroke="#1f5fa8" stroke-width=".8"/><path d="M8 5l8 6.500-9 7" fill="none" stroke="#fff" stroke-width="2.400"/><path d="M15 19h7" stroke="#fff" stroke-width="2.200"/></svg>
<div class="chk sunk" style="left:108px;top:824px;width:159px;height:37px;"></div>
<div style="left:110px;top:826px;width:155px;height:33px;background:#fff"></div>
<svg style="left:114px;top:827px" width="32" height="32" viewBox="0 0 32 32"><path d="M0.500 1.500l8.500-1v21.500l-8.500.500z" fill="#cfd3d7" stroke="#8a9096" stroke-width=".5"/><path d="M1.500 4h6.500M1.500 7h6.500M1.500 10h6.500M1.500 13h6.500M1.500 16h6.500" stroke="#5a6066" stroke-width="1.300"/><path d="M9 0.500l11 1v19.500l-11 1z" fill="url(#gSrvSide)"/><path d="M11 17q6.500-7 13 0" fill="none" stroke="#4a545c" stroke-width="1.800"/><rect x="4" y="16.500" width="27.500" height="14" rx="2" fill="url(#gTool)" stroke="#4a5a68" stroke-width=".7"/><path d="M4.500 21.500h26.500" stroke="#dfe8ee" stroke-width="1"/><path d="M4.500 22.500h26.500" stroke="#4a5a68" stroke-width=".6"/><rect x="9" y="19.500" width="2.500" height="5" rx=".8" fill="#e4eaee" stroke="#4a545c" stroke-width=".5"/><rect x="23.500" y="19.500" width="2.500" height="5" rx=".8" fill="#e4eaee" stroke="#4a545c" stroke-width=".5"/></svg>
<div class="t b" style="left:148px;top:836px;height:16px;line-height:16px;">服务器管理器</div>
<div class="t" style="left:850px;top:834px;height:16px;line-height:16px;"><i>CH</i></div>
<div style="left:869px;top:830px;width:2px;height:22px;background:#808080;border-right:1px solid #fff"></div>
<div style="left:897px;top:830px;width:2px;height:22px;background:#808080;border-right:1px solid #fff"></div>
<div style="left:925px;top:830px;width:2px;height:22px;background:#808080;border-right:1px solid #fff"></div>
<svg style="left:877px;top:833px" width="17" height="16" viewBox="0 0 17 16"><path d="M6 5q2-4 7-3" fill="none" stroke="#888" stroke-width="1"/><rect x="1" y="6" width="15" height="9" rx="1.500" fill="#d8d8d8" stroke="#808080" stroke-width="1"/><path d="M3 9h11M3 11h11M4 13h9" stroke="#909090" stroke-width="1" stroke-dasharray="1.500 1"/></svg>
<svg style="left:905px;top:833px" width="16" height="16" viewBox="0 0 16 16"><circle cx="8" cy="8" r="7.500" fill="#1c3fc8" stroke="#0a1c80" stroke-width=".8"/><circle cx="8" cy="8" r="6" fill="none" stroke="#8fa8ff" stroke-width=".6"/><path d="M5.600 6q0-2.600 2.500-2.600t2.400 2.300q0 1.300-1.200 2t-1.200 1.800" fill="none" stroke="#fff" stroke-width="1.700"/><circle cx="8.100" cy="12" r="1.100" fill="#fff"/></svg>
<svg style="left:931px;top:832px" width="9" height="18" viewBox="0 0 9 18"><rect x="2.500" y="0.500" width="6" height="4" fill="#d4d0c8" stroke="#000" stroke-width="1"/><rect x="2.500" y="0.500" width="6" height="1" fill="#000"/><rect x="0.500" y="3.500" width="6" height="4" fill="#d4d0c8" stroke="#000" stroke-width="1"/><rect x="0.500" y="3.500" width="6" height="1.500" fill="#000"/><path d="M2 12h6l-3 3z" fill="#000"/></svg>
<div class="sunk1" style="left:944px;top:824px;width:205px;height:37px;"></div>
<svg style="left:950px;top:833px" width="18" height="18" viewBox="0 0 18 18"><rect x="3" y="0.500" width="6" height="5" fill="#c8ccd0" stroke="#6a7076" stroke-width=".7"/><path d="M1.500 5.500h9v6q0 2-2.500 2.500v3h-4v-3q-2.500-.500-2.500-2.500z" fill="#8a9096" stroke="#4a5056" stroke-width=".7"/><circle cx="12.500" cy="12.500" r="4.800" fill="#2fae3c" stroke="#fff" stroke-width=".8"/><path d="M10 12.500l2 2 3-4" fill="none" stroke="#fff" stroke-width="1.500"/></svg>
<svg style="left:974px;top:834px" width="16" height="15" viewBox="0 0 16 15"><rect x="0.500" y="0.500" width="15" height="14" rx="1" fill="#70767c" stroke="#4a4e52" stroke-width="1"/><rect x="2" y="2" width="12" height="11" fill="#8a9096"/><path d="M3 9.500v-3l1.500 2 1.500-2v3M8 9.500v-3q1.500-1 2 0v3M10 6.500q1.500-1 2.200 0v3" fill="none" stroke="#fff" stroke-width="1.100"/></svg>
<svg style="left:998px;top:835px" width="14" height="16" viewBox="0 0 16 19"><path d="M2 1v17" stroke="#fff" stroke-width="2.400"/><path d="M2 1v17" stroke="#70767c" stroke-width="1"/><path d="M3.500 2q3-1.500 6 0t5.500 0l-2 4.500 2 4q-3 1.500-5.500 0t-6 0z" fill="#fff" stroke="#80868c" stroke-width=".8"/></svg>
<svg style="left:1023px;top:835px" width="17" height="17" viewBox="0 0 19 19"><rect x="5" y="4" width="11" height="11" fill="#b8bcc0" stroke="#5a5e62" stroke-width=".8"/><rect x="7" y="6" width="7" height="6" fill="#e4e8ec"/><path d="M2 1v5h3v-5M3.500 6v9h3" fill="none" stroke="#4a4e52" stroke-width="1.200"/><path d="M13 10l5 8.500h-10z" fill="#f6d21c" stroke="#a88a10" stroke-width=".7"/><path d="M13 13v3M13 17v.800" stroke="#000" stroke-width="1.100"/></svg>
<svg style="left:1047px;top:835px" width="18" height="16" viewBox="0 0 19 17"><path d="M1 6h3l4-4.500v13l-4-4.500h-3z" fill="#e8ecf0" stroke="#70767c" stroke-width=".9"/><circle cx="13" cy="11.500" r="4.600" fill="#e02020" stroke="#fff" stroke-width=".8"/><path d="M11 9.500l4 4M15 9.500l-4 4" stroke="#fff" stroke-width="1.500"/></svg>
<div class="t" style="left:1060px;top:828px;width:80px;text-align:center"><i>20:10</i></div>
<div class="t" style="left:1060px;top:844px;width:80px;text-align:center"><i>2019/4/2</i></div>
<svg style="left:1133px;top:837px" width="15" height="17" viewBox="0 0 15 17"><rect x="0.500" y="0.500" width="14" height="11" fill="#2f7fd8" stroke="#9ab8e0" stroke-width="1"/><rect x="1" y="9" width="13" height="2.500" fill="#1c3f90"/><rect x="2" y="9.500" width="2" height="1.500" fill="#5fd23f"/><rect x="0" y="12.500" width="15" height="1.500" fill="#d8dce0"/></svg>
</div>
</body></html>
